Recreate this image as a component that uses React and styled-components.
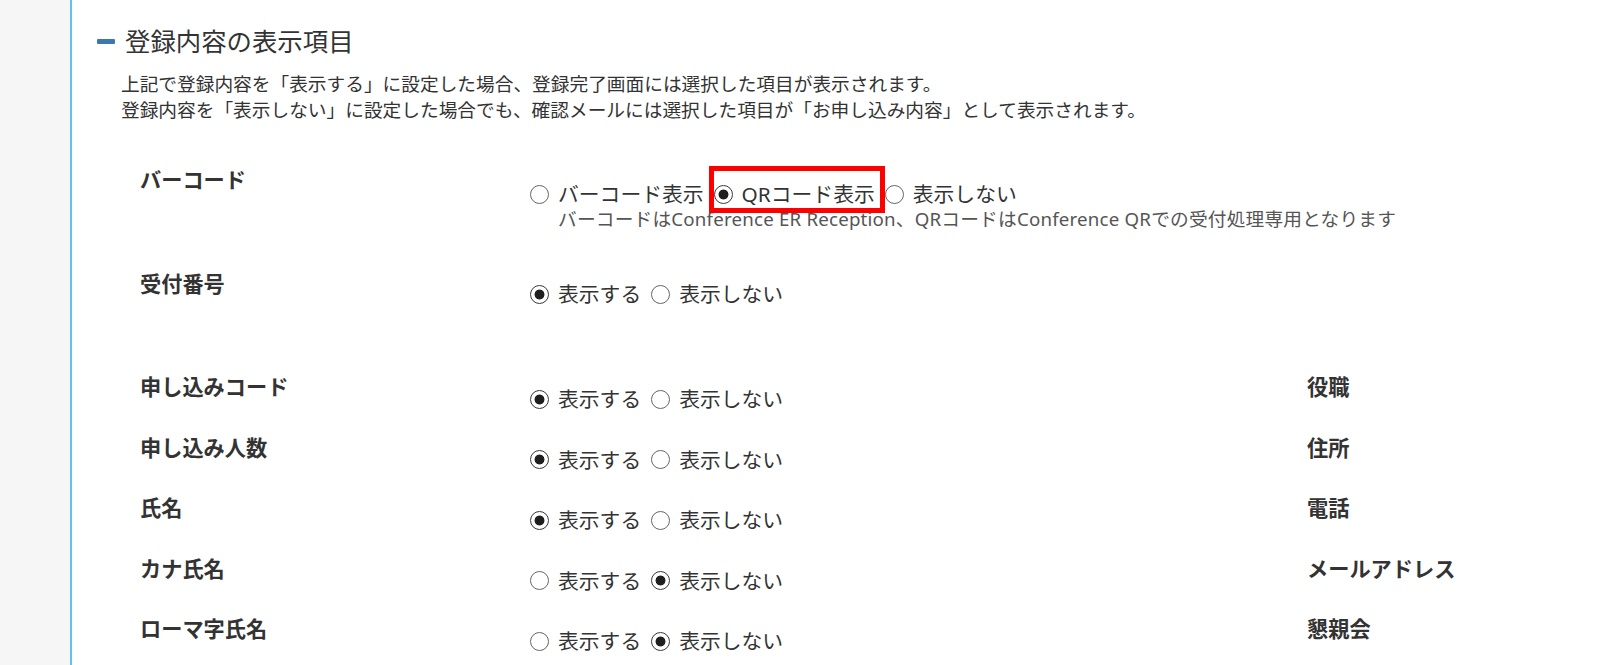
import React from 'react';
import styled, { createGlobalStyle } from 'styled-components';

const GlobalStyle = createGlobalStyle`
  html, body {
    margin: 0;
    padding: 0;
    overflow: hidden;
    background: #ffffff;
  }
  body {
    font-family: "Noto Sans", "Noto Sans CJK JP", sans-serif;
    color: #333333;
  }
`;

const Page = styled.div`
  display: flex;
  min-height: 100vh;
`;

const Sidebar = styled.aside`
  flex: 0 0 70px;
  background: #f6f6f6;
  border-right: 2px solid #5ec4ea;
`;

const Main = styled.main`
  flex: 1;
  min-width: 0;
  padding: 26px 0 0 25px;
`;

const Heading = styled.h2`
  display: flex;
  align-items: center;
  gap: 10px;
  margin: 0;
  font-size: 25.4px;
  line-height: 30px;
  font-weight: 400;
  color: #333333;
`;

const Dash = styled.span`
  width: 18px;
  height: 5px;
  background: #3b78ad;
  border-radius: 1px;
`;

const Description = styled.p`
  margin: 15px 0 0 24px;
  font-size: 18.7px;
  line-height: 26px;
  color: #333333;
`;

const Form = styled.div`
  margin-top: 42px;
  padding-left: 43px;
`;

const TopRow = styled.div`
  display: grid;
  grid-template-columns: 390px auto;
  align-items: start;
  height: ${p => p.$height}px;
`;

const LowerRow = styled.div`
  display: grid;
  grid-template-columns: 390px 777px auto;
  align-items: start;
  height: 60.5px;
`;

const FieldLabel = styled.div`
  font-size: 21.2px;
  font-weight: 700;
  line-height: 30px;
  color: #333333;
  white-space: nowrap;
`;

const RadioCell = styled.div`
  margin-top: ${p => p.$offset ?? 12}px;
`;

const OptionLine = styled.div`
  display: flex;
  align-items: center;
  font-size: 20.8px;
  line-height: 30px;
  color: #333333;
  white-space: nowrap;
`;

const Option = styled.label`
  position: relative;
  display: inline-flex;
  align-items: center;
  gap: 9px;
  margin-right: 10px;

  ${p => p.$highlight && `
    &::after {
      content: '';
      position: absolute;
      left: -5px;
      right: -10px;
      top: -13px;
      bottom: -4px;
      border: 5px solid #ff0000;
      pointer-events: none;
    }
  `}
`;

const Radio = styled.input.attrs({ type: 'radio' })`
  appearance: none;
  -webkit-appearance: none;
  box-sizing: border-box;
  flex-shrink: 0;
  margin: 0;
  width: 19px;
  height: 19px;
  border: 1.6px solid #666666;
  border-radius: 50%;
  background: #ffffff;

  &:checked {
    border-color: #3a3a3a;
    background: radial-gradient(circle, #1f1f1f 0 4.6px, #ffffff 5.3px);
  }
`;

const Note = styled.div`
  padding-left: 28px;
  font-size: 18.7px;
  line-height: 20px;
  letter-spacing: 0.2px;
  color: #555555;
  white-space: nowrap;
`;

function RadioGroup({ name, options, value, highlight }) {
  return (
    <OptionLine>
      {options.map((opt, i) => (
        <Option key={opt} $highlight={highlight === i}>
          <Radio name={name} defaultChecked={value === i} />
          {opt}
        </Option>
      ))}
    </OptionLine>
  );
}

const SHOW = ['表示する', '表示しない'];

const lowerRows = [
  { label: '申し込みコード', value: 0, right: '役職' },
  { label: '申し込み人数', value: 0, right: '住所' },
  { label: '氏名', value: 0, right: '電話' },
  { label: 'カナ氏名', value: 1, right: 'メールアドレス' },
  { label: 'ローマ字氏名', value: 1, right: '懇親会' },
];

export default function App() {
  return (
    <>
      <GlobalStyle />
      <Page>
        <Sidebar />
        <Main>
          <Heading>
            <Dash />
            登録内容の表示項目
          </Heading>
          <Description>
            上記で登録内容を「表示する」に設定した場合、登録完了画面には選択した項目が表示されます。
            <br />
            登録内容を「表示しない」に設定した場合でも、確認メールには選択した項目が「お申し込み内容」として表示されます。
          </Description>
          <Form>
            <TopRow $height={104}>
              <FieldLabel>バーコード</FieldLabel>
              <RadioCell $offset={14}>
                <RadioGroup
                  name="barcode"
                  options={['バーコード表示', 'QRコード表示', '表示しない']}
                  value={1}
                  highlight={1}
                />
                <Note>
                  バーコードはConference ER Reception、QRコードはConference QRでの受付処理専用となります
                </Note>
              </RadioCell>
            </TopRow>
            <TopRow $height={103}>
              <FieldLabel>受付番号</FieldLabel>
              <RadioCell $offset={10}>
                <RadioGroup name="receipt" options={SHOW} value={0} />
              </RadioCell>
            </TopRow>
            {lowerRows.map((row, i) => (
              <LowerRow key={row.label}>
                <FieldLabel>{row.label}</FieldLabel>
                <RadioCell>
                  <RadioGroup name={`row${i}`} options={SHOW} value={row.value} />
                </RadioCell>
                <FieldLabel>{row.right}</FieldLabel>
              </LowerRow>
            ))}
          </Form>
        </Main>
      </Page>
    </>
  );
}
